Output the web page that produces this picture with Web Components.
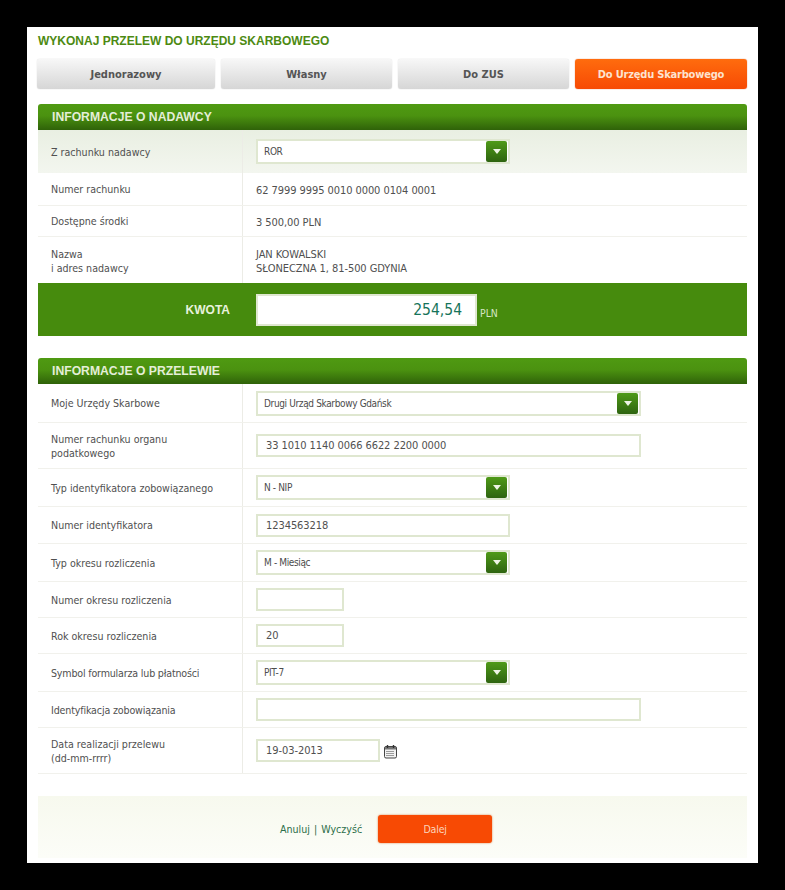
<!DOCTYPE html>
<html lang="pl">
<head>
<meta charset="utf-8">
<title>Wykonaj przelew do Urzędu Skarbowego</title>
<style>
  html, body { margin: 0; background: #000; }
  body { font-family: "DejaVu Sans Condensed", "DejaVu Sans", sans-serif; font-size: 11px; color: #505050; }
</style>
</head>
<body>
<transfer-page>
  <span slot="title">WYKONAJ PRZELEW DO URZĘDU SKARBOWEGO</span>

  <div slot="tabs" style="display:flex;justify-content:space-between;margin-left:-1px">
    <tab-button style="width:178px">Jednorazowy</tab-button>
    <tab-button style="width:171px">Własny</tab-button>
    <tab-button style="width:171px">Do ZUS</tab-button>
    <tab-button active style="width:172px">Do Urzędu Skarbowego</tab-button>
  </div>

  <section-head>INFORMACJE O NADAWCY</section-head>
  <form-row h="43" tinted label="Z rachunku nadawcy"><select-box w="254">ROR</select-box></form-row>
  <form-row h="33" text label="Numer rachunku">62 7999 9995 0010 0000 0104 0001</form-row>
  <form-row h="31" text label="Dostępne środki">3 500,00 PLN</form-row>
  <form-row h="46" plain label="Nazwa&#10;i adres nadawcy"><div style="white-space:pre-line;line-height:14px;padding-top:4px">JAN KOWALSKI
SŁONECZNA 1, 81-500 GDYNIA</div></form-row>
  <amount-bar value="254,54"></amount-bar>

  <section-head style="margin-top:22px">INFORMACJE O PRZELEWIE</section-head>
  <form-row h="39" label="Moje Urzędy Skarbowe"><select-box w="385">Drugi Urząd Skarbowy Gdańsk</select-box></form-row>
  <form-row h="46" label="Numer rachunku organu&#10;podatkowego"><text-field w="385">33 1010 1140 0066 6622 2200 0000</text-field></form-row>
  <form-row h="38" label="Typ identyfikatora zobowiązanego"><select-box w="254">N - NIP</select-box></form-row>
  <form-row h="37" label="Numer identyfikatora"><text-field w="254">1234563218</text-field></form-row>
  <form-row h="38" label="Typ okresu rozliczenia"><select-box w="254">M - Miesiąc</select-box></form-row>
  <form-row h="36" label="Numer okresu rozliczenia"><text-field w="88"></text-field></form-row>
  <form-row h="36" label="Rok okresu rozliczenia"><text-field w="88">20</text-field></form-row>
  <form-row h="38" style="--track:-.18px" label="Symbol formularza lub płatności"><select-box w="254">PIT-7</select-box></form-row>
  <form-row h="36" style="--track:-.15px" label="Identyfikacja zobowiązania"><text-field w="385"></text-field></form-row>
  <form-row h="46" label="Data realizacji przelewu&#10;(dd-mm-rrrr)">
    <div style="display:flex;align-items:center;gap:3px">
      <text-field w="124">19-03-2013</text-field>
      <calendar-icon></calendar-icon>
    </div>
  </form-row>

  <form-actions></form-actions>
</transfer-page>

<script>
class TransferPage extends HTMLElement {
  connectedCallback() {
    this.attachShadow({ mode: 'open' });
    this.shadowRoot.innerHTML = `
      <style>
        :host { display: block; box-sizing: border-box; width: 731px; height: 836px; margin: 27px 0 27px 27px; padding: 0 11px; background: #fff; }
        .title { height: 32px; padding-top: 7px; box-sizing: border-box; font: bold 12px/14px "Liberation Sans", Arial, sans-serif; color: #4d8a12; }
        .tabs { height: 45px; }
      </style>
      <div class="title"><slot name="title"></slot></div>
      <div class="tabs"><slot name="tabs"></slot></div>
      <slot></slot>
    `;
  }
}

class TabButton extends HTMLElement {
  connectedCallback() {
    this.attachShadow({ mode: 'open' });
    this.shadowRoot.innerHTML = `
      <style>
        :host { display: flex; align-items: center; justify-content: center; box-sizing: border-box; height: 30px; border-radius: 3px;
                background: linear-gradient(#f7f7f7, #d6d6d6); box-shadow: 0 0 1px #bbb; color: #555; font-weight: bold; font-size: 11px; }
        :host([active]) { background: linear-gradient(#ff6c0e, #f74a04); color: #fde3cf; box-shadow: 0 0 1px #c94a10; letter-spacing: -.2px; }
      </style>
      <slot></slot>
    `;
  }
}

class SectionHead extends HTMLElement {
  connectedCallback() {
    this.attachShadow({ mode: 'open' });
    this.shadowRoot.innerHTML = `
      <style>
        :host { display: flex; align-items: center; box-sizing: border-box; height: 26px; padding-left: 14px; border-radius: 3px 3px 0 0;
                background: linear-gradient(#4f9a12 0, #4b9210 45%, #2f6209 100%); color: #e4eed8;
                font: bold 12.2px "Liberation Sans", Arial, sans-serif; }
      </style>
      <slot></slot>
    `;
  }
}

class FormRow extends HTMLElement {
  connectedCallback() {
    const h = this.getAttribute('h');
    const label = this.getAttribute('label');
    this.attachShadow({ mode: 'open' });
    this.shadowRoot.innerHTML = `
      <style>
        :host { display: grid; grid-template-columns: 205px 1fr; box-sizing: border-box; height: ${h}px; border-bottom: 1px solid #f1f1ec; color: #505050; }
        :host([tinted]) { background: linear-gradient(#e9efe2, #f3f6ef); border-bottom: 0; }
        :host([plain]) { border-bottom: 0; }
        .label { display: flex; align-items: center; padding: 0 0 0 13px; border-right: 1px solid #ecece6; white-space: pre-line; line-height: 14px;
                 font-size: 10.6px; letter-spacing: var(--track, 0); }
        :host([plain]) .label { padding-top: 2px; }
        .value { display: flex; align-items: center; padding-left: 13px; letter-spacing: -.07px; }
        :host([text]) .value { padding-top: 2px; }
      </style>
      <div class="label"></div>
      <div class="value"><slot></slot></div>
    `;
    this.shadowRoot.querySelector('.label').textContent = label;
  }
}

class SelectBox extends HTMLElement {
  connectedCallback() {
    this.attachShadow({ mode: 'open' });
    this.shadowRoot.innerHTML = `
      <style>
        :host { display: flex; align-items: center; justify-content: space-between; box-sizing: border-box; width: ${this.getAttribute('w')}px; height: 25px;
                padding: 0 1px 0 6px; background: #fff; border: 2px solid #dfe7d0; font-size: 10px; letter-spacing: -.36px; color: #4c4c4c; }
        .arrow { display: flex; align-items: center; justify-content: center; width: 21px; height: 21px; border-radius: 2px;
                 background: linear-gradient(#4f9a18, #2e6410); }
        .arrow i { border: 4px solid transparent; border-top: 5px solid #eef4e6; border-bottom: 0; }
      </style>
      <span><slot></slot></span>
      <span class="arrow"><i></i></span>
    `;
  }
}

class TextField extends HTMLElement {
  connectedCallback() {
    this.attachShadow({ mode: 'open' });
    this.shadowRoot.innerHTML = `
      <style>
        :host { display: flex; align-items: center; box-sizing: border-box; width: ${this.getAttribute('w')}px; height: 23px;
                padding-left: 8px; background: #fff; border: 2px solid #dfe7d0; color: #505050; }
      </style>
      <slot></slot>
    `;
  }
}

class AmountBar extends HTMLElement {
  connectedCallback() {
    this.attachShadow({ mode: 'open' });
    this.shadowRoot.innerHTML = `
      <style>
        :host { display: grid; grid-template-columns: 205px 1fr; height: 53px; background: #468b0d; }
        .label { padding: 20px 13px 0 0; text-align: right; font: bold 12px/14px "Liberation Sans", Arial, sans-serif; color: #e8f2dc; }
        .value { display: flex; padding: 11px 0 0 13px; }
        .box { box-sizing: border-box; width: 221px; height: 32px; padding-right: 13px; background: #fff; border: 2px solid #dfe7d0;
               text-align: right; font-size: 15.5px; line-height: 29px; color: #16745a; }
        .cur { padding: 12px 0 0 3px; font-size: 10.4px; line-height: 14px; color: #d6e6c6; }
      </style>
      <div class="label">KWOTA</div>
      <div class="value"><div class="box"></div><div class="cur">PLN</div></div>
    `;
    this.shadowRoot.querySelector('.box').textContent = this.getAttribute('value');
  }
}

class CalendarIcon extends HTMLElement {
  connectedCallback() {
    this.attachShadow({ mode: 'open' });
    this.shadowRoot.innerHTML = `
      <style>:host { display: block; width: 15px; height: 15px; margin-top: 1px; } svg { display: block; }</style>
      <svg width="15" height="15" viewBox="0 0 15 15">
        <rect x="1.5" y="2.5" width="12" height="11.5" rx="1.5" fill="#f2f2f2" stroke="#444"/>
        <rect x="2" y="3" width="11" height="2.5" fill="#777"/>
        <path d="M4.5 1v3M10.5 1v3" stroke="#333" stroke-width="1.4"/>
        <path d="M3.5 7.5h8M3.5 9.5h8M3.5 11.5h8" stroke="#444" stroke-dasharray="1 1"/>
      </svg>
    `;
  }
}

class FormActions extends HTMLElement {
  connectedCallback() {
    this.attachShadow({ mode: 'open' });
    this.shadowRoot.innerHTML = `
      <style>
        :host { display: flex; align-items: center; box-sizing: border-box; height: 62px; margin-top: 22px; padding: 3px 0 0 242px;
                background: linear-gradient(#f7f9ee, #fcfdf8); color: #2c6e49; font-size: 10.6px; }
        .sep { padding: 0 4px; }
        .next { display: flex; align-items: center; justify-content: center; width: 114px; height: 28px; margin-left: 16px; border-radius: 3px;
                background: #f74a04; box-shadow: 0 0 2px #d9783f; color: #fbd5bc; letter-spacing: -.2px; }
      </style>
      <span>Anuluj</span><span class="sep">|</span><span>Wyczyść</span>
      <span class="next">Dalej</span>
    `;
  }
}

customElements.define('transfer-page', TransferPage);
customElements.define('tab-button', TabButton);
customElements.define('section-head', SectionHead);
customElements.define('form-row', FormRow);
customElements.define('select-box', SelectBox);
customElements.define('text-field', TextField);
customElements.define('amount-bar', AmountBar);
customElements.define('calendar-icon', CalendarIcon);
customElements.define('form-actions', FormActions);
</script>
</body>
</html>
